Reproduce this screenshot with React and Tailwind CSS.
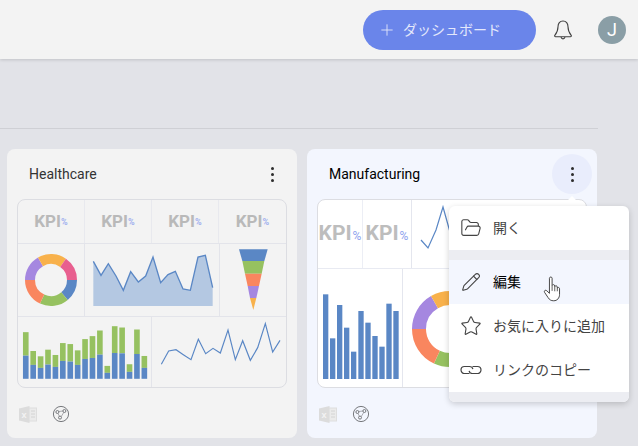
import React from 'react';
import { FolderOpen, Pencil, Star, Plus } from 'lucide-react';

const JP = { fontFamily: '"Noto Sans CJK JP", Roboto, sans-serif' };

const colors = {
  blue: '#5a87c5',
  green: '#96c160',
  orange: '#f9865f',
  purple: '#a587e0',
  yellow: '#f8b14b',
  pink: '#e85f8f',
};

const arcPath = (cx, cy, r0, r1, a0, a1) => {
  const rad = (d) => (d * Math.PI) / 180;
  const pt = (r, a) => `${cx + r * Math.cos(rad(a))} ${cy + r * Math.sin(rad(a))}`;
  const large = a1 - a0 > 180 ? 1 : 0;
  return `M${pt(r1, a0)} A${r1} ${r1} 0 ${large} 1 ${pt(r1, a1)} L${pt(r0, a1)} A${r0} ${r0} 0 ${large} 0 ${pt(r0, a0)} Z`;
};

const Donut = ({ cx, cy, r0, r1, box }) => {
  const parts = [
    [0, 50, colors.blue],
    [50, 115, colors.green],
    [115, 180, colors.orange],
    [180, 240, colors.purple],
    [240, 305, colors.yellow],
    [305, 360, colors.pink],
  ];
  return (
    <svg viewBox={box} className="block w-full h-full">
      {parts.map(([a, b, c]) => (
        <path key={a} d={arcPath(cx, cy, r0, r1, a, b)} fill={c} />
      ))}
    </svg>
  );
};

const Kpi = ({ big }) => (
  <div className="flex items-center justify-center h-full font-bold" style={{ fontFamily: 'Roboto, sans-serif' }}>
    <span className={big ? 'text-[21px] text-[#bdbdbd]' : 'text-[17px] text-[#b9b9b9]'}>KPI</span>
    <span className={big ? 'text-[12px] font-normal text-[#8ea2ee] mt-1 ml-px' : 'text-[9px] text-[#9fb0ee] mt-0.5'}>%</span>
  </div>
);

const areaPts = '280,349 303,391 325,356 348,393 370,436 392,380 415,411 437,393 459,336 482,413 504,389 526,379 549,432 571,436 594,336 616,331 638,428';
const linePts = '484,163 506,123 528,119 550,134 573,149 595,88 617,131 639,115 661,129 684,60 706,149 728,92 751,151 773,113 796,41 818,126 840,91';

const stackTops = [66, 123, 139, 119, 135, 99, 102, 121, 87, 78, 61, 168, 48, 52, 163, 58, 138];
const stackMids = [137, 165, 174, 164, 171, 153, 155, 165, 147, 144, 134, 189, 129, 130, 186, 132, 174];
const barXs = [54, 75, 96, 117, 138, 160, 181, 202, 223, 244, 265];
const barTops = [433, 565, 465, 533, 605, 483, 518, 558, 590, 461, 483];

const HealthThumb = () => (
  <div className="h-[189px] rounded-lg border border-[#dcdde2] overflow-hidden flex flex-col">
    <div className="h-[44px] grid grid-cols-4 border-b border-[#e3e4ea]">
      {[0, 1, 2, 3].map((i) => (
        <div key={i} className={i < 3 ? 'border-r border-[#e8e9ee]' : ''}>
          <Kpi />
        </div>
      ))}
    </div>
    <div className="h-[73px] flex border-b border-[#e3e4ea]">
      <div className="w-[67px] border-r border-[#e3e4ea]">
        <Donut cx={33} cy={36} r0={16} r1={26} box="0 0 66 72" />
      </div>
      <div className="w-[135px] border-r border-[#e3e4ea]">
        <svg viewBox="255 297 402 216" className="block w-full h-full">
          <polygon points={`${areaPts} 638,483 280,483`} fill="#b4c8e2" />
          <polyline points={areaPts} fill="none" stroke={colors.blue} strokeWidth="4" />
        </svg>
      </div>
      <div className="flex-1">
        <svg viewBox="660 297 198 216" className="block w-full h-full">
          <polygon points="717,313 803,313 793,348 727,348" fill={colors.blue} />
          <polygon points="727,348 793,348 785,386 735,386" fill={colors.green} />
          <polygon points="735,386 785,386 777,423 743,423" fill={colors.orange} />
          <polygon points="743,423 777,423 769,459 750,459" fill={colors.purple} />
          <polygon points="750,459 769,459 760,495" fill={colors.yellow} />
        </svg>
      </div>
    </div>
    <div className="flex-1 grid grid-cols-2">
      <div className="border-r border-[#e3e4ea]">
        <svg viewBox="54 21 402 210" className="block w-full h-full">
          {stackTops.map((t, i) => (
            <g key={i}>
              <rect x={69 + i * 22.4} y={t} width="17" height={stackMids[i] - t} fill={colors.green} />
              <rect x={69 + i * 22.4} y={stackMids[i]} width="17" height={207 - stackMids[i]} fill={colors.blue} />
            </g>
          ))}
        </svg>
      </div>
      <div>
        <svg viewBox="456 21 402 210" className="block w-full h-full">
          <polyline points={linePts} fill="none" stroke={colors.blue} strokeWidth="3.5" />
        </svg>
      </div>
    </div>
  </div>
);

const MfgThumb = () => (
  <div className="h-[189px] rounded-lg border border-[#dcdde2] bg-white overflow-hidden flex flex-col">
    <div className="h-[69px] flex border-b border-[#e8eaf2]">
      <div className="w-[45px] border-r border-[#eceef5]">
        <Kpi big />
      </div>
      <div className="w-[49px] border-r border-[#e4e6ee]">
        <Kpi big />
      </div>
      <div className="flex-1">
        <svg viewBox="412 200 174 68" className="block w-full h-full">
          <polyline points="421,240 428,248 436,230 443,207 450,232 462,240" fill="none" stroke={colors.blue} strokeWidth="1.2" />
        </svg>
      </div>
    </div>
    <div className="flex-1 flex">
      <div className="w-[85px] border-r border-[#e4e6ee]">
        <svg viewBox="39 357 252 354" className="block w-full h-full">
          {barTops.map((t, i) => (
            <rect key={i} x={barXs[i]} y={t} width="16" height={687 - t} fill={colors.blue} />
          ))}
        </svg>
      </div>
      <div className="flex-1">
        <Donut cx={47} cy={60} r0={24} r1={38} box="0 0 183 118" />
      </div>
    </div>
  </div>
);

const ExcelIcon = () => (
  <svg width="18" height="17" viewBox="0 0 18 17">
    <rect x="9" y="2" width="8.5" height="13" fill="#ebebeb" stroke="#dedede" />
    <path d="M12 5h4M12 8h4M12 11h4" stroke="#d4d4d4" />
    <path d="M0 2.5 10.5 0v17L0 14.5z" fill="#dcdcdc" />
    <text x="2.6" y="11.5" fontSize="8" fontWeight="700" fill="#f3f3f3" fontFamily="Roboto, sans-serif">X</text>
  </svg>
);

const ShareIcon = () => (
  <svg width="18" height="18" viewBox="0 0 18 18" fill="none" stroke="#77797d" strokeWidth="1">
    <circle cx="9" cy="9" r="7.6" />
    <circle cx="5.4" cy="7" r="1.5" />
    <circle cx="12.4" cy="6" r="1.5" />
    <circle cx="8" cy="12.6" r="1.5" />
    <path d="M6.8 6.5 11 6M5.9 8.4 7.4 11.2M9.2 11.6 11.8 7.4" strokeWidth="0.6" />
  </svg>
);

const BellIcon = () => (
  <svg width="20" height="22" viewBox="0 0 20 22" fill="none" stroke="#404040" strokeWidth="1.1" strokeLinejoin="round">
    <path d="M10 2c-3.2 0-5 2.6-5 5.8 0 4-1.2 6.2-3.2 8.6-.5.7 0 1.3.8 1.3h14.8c.8 0 1.3-.6.8-1.3-2-2.4-3.2-4.6-3.2-8.6C15 4.6 13.2 2 10 2z" />
    <path d="M8 18c.3 1.3 1 1.9 2 1.9s1.700-.6 2-1.900" />
  </svg>
);

const LinkIcon = ({ className }) => (
  <svg width="22" height="22" viewBox="0 0 22 22" fill="none" stroke="currentColor" strokeWidth="1.2" className={className}>
    <path d="M9.500 14.500H4.500a3.500 3.500 0 0 1 0-7h5a3.500 3.500 0 0 1 3.400 2.700" />
    <path d="M12.500 7.500h5a3.500 3.500 0 0 1 0 7h-5a3.500 3.500 0 0 1-3.400-2.700" />
  </svg>
);

const PencilIcon = ({ className }) => <Pencil size={20} strokeWidth={1.3} className={`mx-px ${className}`} />;

const Kebab = () => (
  <div className="flex flex-col gap-[3px]">
    <span className="w-[3px] h-[3px] rounded-full bg-[#2d2d2d]" />
    <span className="w-[3px] h-[3px] rounded-full bg-[#2d2d2d]" />
    <span className="w-[3px] h-[3px] rounded-full bg-[#2d2d2d]" />
  </div>
);

const Card = ({ title, active, children }) => (
  <div className={`w-[290px] h-[289px] rounded-lg px-[10px] flex flex-col ${active ? 'bg-[#f3f6fe]' : 'bg-[#f3f3f3]'}`}>
    <div className="h-[50px] flex items-center justify-between pl-3 pr-[13px]">
      <span className={`text-[14px] ${active ? 'text-black' : 'text-[#333333]'}`} style={{ fontFamily: 'Roboto, sans-serif' }}>
        {title}
      </span>
      <Kebab />
    </div>
    {children}
    <div className="flex items-center gap-[15px] mt-[17px] pl-[2px]">
      <ExcelIcon />
      <ShareIcon />
    </div>
  </div>
);

const MenuItem = ({ icon: Icon, label, hover }) => (
  <div className={`h-[44px] flex items-center pl-[11px] gap-[11px] ${hover ? 'bg-[#f3f6fe] text-black' : 'text-[#444444]'}`}>
    <Icon size={22} strokeWidth={1.2} className="text-[#444444]" />
    <span className="text-[14px] mb-0.5" style={JP}>{label}</span>
  </div>
);

const HandCursor = () => (
  <svg width="20" height="26" viewBox="0 0 17 25.500" className="absolute left-[542px] top-[276px]">
    <path
      d="M6 2.200c0-1.600 2.600-1.600 2.600 0v7.200c.4-1.400 2.600-1.200 2.600.4v.6c.4-1.300 2.500-1 2.500.5v.9c.5-1 2.200-.7 2.200.7v5.600c0 3.400-2.200 6.200-5.700 6.200-2.700 0-4.200-1-5.600-3.200L1.200 16c-.9-1.500 1-2.800 2.200-1.500L6 17z"
      fill="#ffffff"
      stroke="#3a3a3a"
      strokeWidth="0.9"
      strokeLinejoin="round"
    />
    <path d="M8.600 9.600v5M11.200 10.400v4.600M13.700 11.400v3.600" stroke="#3a3a3a" strokeWidth="0.8" />
  </svg>
);

export default function App() {
  return (
    <div className="relative w-[638px] h-[446px] overflow-hidden bg-[#e2e3e8]" style={{ fontFamily: 'Roboto, sans-serif' }}>
      <header className="h-[59px] bg-[#f3f3f3] shadow-[0_1px_3px_rgba(0,0,0,0.15)] flex items-center justify-end pr-[12px]">
        <button className="w-[173px] h-[40px] rounded-full bg-[#6a85ea] flex items-center pl-[15px] gap-[7px] text-[#e4e8fb] text-[14px]" style={JP}>
          <Plus size={18} strokeWidth={1.2} />
          ダッシュボード
        </button>
        <div className="ml-[17px]">
          <BellIcon />
        </div>
        <div className="ml-[25px] w-7 h-7 rounded-full bg-[#8a9ea6] flex items-center justify-center text-white text-[18px]">J</div>
      </header>

      <div className="mt-[69px] w-[598px] border-t border-[#cfd0d5]" />

      <div className="flex gap-[10px] pl-[7px] pt-[20px]">
        <Card title="Healthcare">
          <HealthThumb />
        </Card>
        <Card title="Manufacturing" active>
          <MfgThumb />
        </Card>
      </div>

      {/* kebab highlight + popup menu sit on top of the cards */}
      <div className="absolute left-[552px] top-[154px] w-[40px] h-[40px] rounded-full bg-[#e9edfc] flex items-center justify-center">
        <Kebab />
      </div>
      <div className="absolute left-[565px] top-[199px] w-[14px] h-[14px] rotate-45 bg-white" />
      <div className="absolute left-[449px] top-[206px] w-[180px] rounded-md bg-white overflow-hidden shadow-[0_2px_6px_rgba(0,0,0,0.18)]">
        <MenuItem icon={FolderOpen} label="開く" />
        <div className="h-[10px] bg-[#ecedf2]" />
        <MenuItem icon={PencilIcon} label="編集" hover />
        <MenuItem icon={Star} label="お気に入りに追加" />
        <MenuItem icon={LinkIcon} label="リンクのコピー" />
        <div className="h-[10px] bg-[#ecedf2]" />
      </div>
      <HandCursor />
    </div>
  );
}
